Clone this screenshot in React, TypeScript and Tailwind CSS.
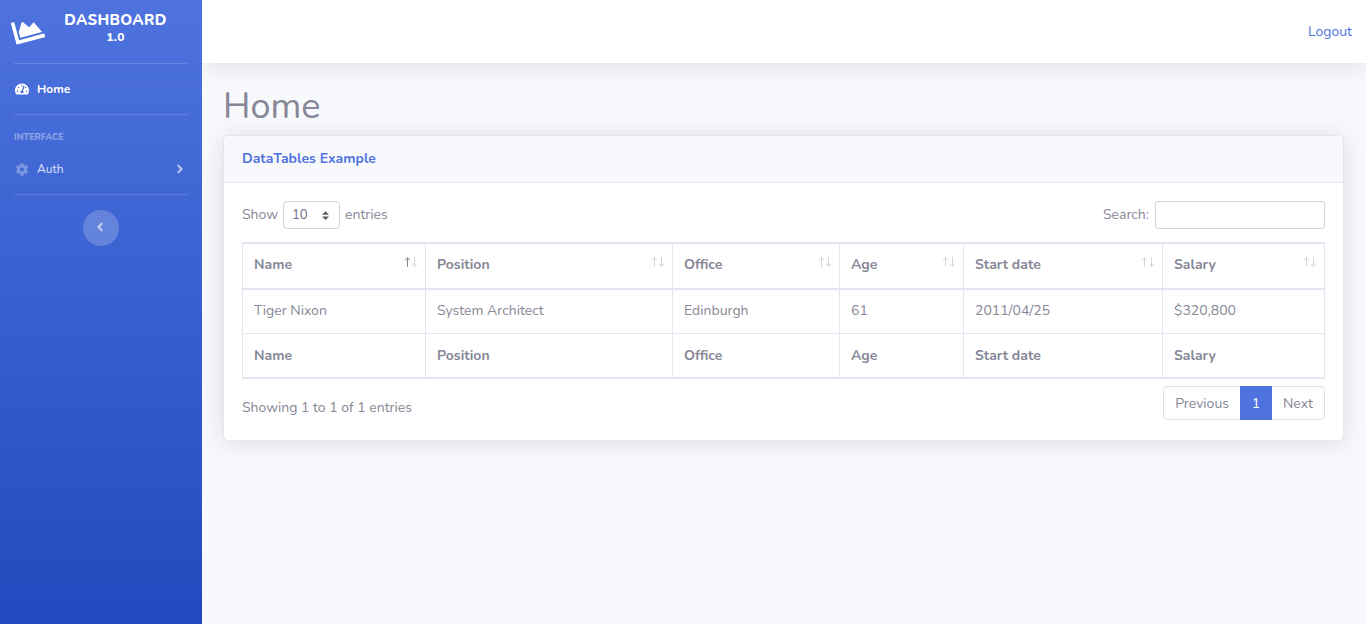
import { FaAngleLeft, FaAngleRight, FaChartArea, FaCog, FaTachometerAlt } from "react-icons/fa";

const columns = [
  { title: "Name", width: "w-[183px]" },
  { title: "Position", width: "w-[247px]" },
  { title: "Office", width: "w-[167px]" },
  { title: "Age", width: "w-[124px]" },
  { title: "Start date", width: "w-[199px]" },
  { title: "Salary", width: "w-[162px]" },
];

const rows = [["Tiger Nixon", "System Architect", "Edinburgh", "61", "2011/04/25", "$320,800"]];

function SortArrows({ ascending }: { ascending: boolean }) {
  return (
    <svg className="mb-[5px] h-[10px] w-[13px]" viewBox="0 0 13 10" fill="none" stroke="#858796" aria-hidden="true">
      <path d="M3.5 10V1M1 3.2L3.5 .8L6 3.2" strokeOpacity={ascending ? 1 : 0.35} />
      <path d="M10.5 0V9M8 6.8L10.5 9.2L13 6.8" strokeOpacity={0.35} />
    </svg>
  );
}

function Sidebar() {
  return (
    <nav className="relative z-10 flex w-[202px] shrink-0 flex-col bg-linear-to-b from-[#4e73df] to-[#224abe] pr-[15px] pl-[14px] text-white">
      <a href="#" className="-mr-[15px] -ml-[14px] flex h-[63px] items-center pl-[13px] font-extrabold">
        <FaChartArea className="mb-[4px] size-[30px] shrink-0 -rotate-15" />
        <span className="flex flex-1 flex-col items-center pr-[15px] pb-2 pl-[1px] text-center">
          <span className="text-[15px] leading-[19px] tracking-wide">DASHBOARD</span>
          <span className="text-[12px] leading-[15px] tracking-wide">1.0</span>
        </span>
      </a>
      <hr className="border-white/15" />
      <a href="#" className="flex h-[50px] items-center text-[12px] font-bold">
        <FaTachometerAlt className="mr-[8px] ml-[1px] size-[14px]" />
        Home
      </a>
      <hr className="border-white/15" />
      <h2 className="pt-[15px] text-[9px] leading-[14px] font-extrabold text-white/40">INTERFACE</h2>
      <button type="button" className="flex h-[50px] items-center text-[12px] text-white/80">
        <FaCog className="mr-[7px] h-[13px] w-[16px] text-white/30" />
        Auth
        <FaAngleRight className="ml-auto size-[14px] text-white/60" />
      </button>
      <hr className="border-white/15" />
      <button
        type="button"
        aria-label="Collapse sidebar"
        className="mt-[15px] flex size-9 items-center justify-center self-center rounded-full bg-white/20 text-white/60"
      >
        <FaAngleLeft className="mr-[2px] mb-[2px] size-[14px]" />
      </button>
    </nav>
  );
}

function EntriesTable() {
  return (
    <table className="w-full table-fixed border-separate border-spacing-0 border-y-2 border-l border-[#e3e6f0] text-left">
      <thead>
        <tr>
          {columns.map((column, index) => (
            <th
              key={column.title}
              aria-sort={index === 0 ? "ascending" : undefined}
              className={`${column.width} h-[46px] border-r border-b-2 border-[#e3e6f0] pr-2 pb-[3px] pl-[11px] font-bold`}
            >
              <button type="button" className="flex w-full items-center justify-between">
                {column.title}
                <SortArrows ascending={index === 0} />
              </button>
            </th>
          ))}
        </tr>
      </thead>
      <tbody>
        {rows.map((row) => (
          <tr key={row[0]}>
            {row.map((cell) => (
              <td key={cell} className="h-[44px] border-r border-b border-[#e3e6f0] px-[11px] pb-[1px]">
                {cell}
              </td>
            ))}
          </tr>
        ))}
      </tbody>
      <tfoot>
        <tr>
          {columns.map((column) => (
            <th key={column.title} className="h-[43px] border-r border-[#e3e6f0] px-[11px] font-bold">
              {column.title}
            </th>
          ))}
        </tr>
      </tfoot>
    </table>
  );
}

export default function App() {
  return (
    <div className="flex min-h-screen bg-[#f8f9fc] font-['Nunito','Lato',sans-serif] text-[14px] leading-[22px] text-[#858796]">
      <Sidebar />
      <div className="min-w-0 flex-1">
        <header className="flex h-[63px] items-center justify-end bg-white px-[14px] shadow-[0_2px_25px_rgba(58,59,69,0.15)]">
          <a href="#" className="text-[#4e73df]">
            Logout
          </a>
        </header>
        <main className="px-[22px] pt-[22px] pl-[21px]">
          <h1 className="mb-[6px] text-[36px] leading-[44px] font-normal">Home</h1>
          <section className="rounded-[5px] border border-[#e3e6f0] bg-white shadow-[0_2px_25px_rgba(58,59,69,0.15)]">
            <h2 className="rounded-t-[5px] border-b border-[#e3e6f0] bg-[#f8f9fc] px-[18px] py-3 font-bold text-[#4e73df]">
              DataTables Example
            </h2>
            <div className="p-[18px] pb-5">
              <div className="mb-[13px] flex items-center justify-between">
                <label className="flex items-center gap-[5px]">
                  Show
                  <span className="relative flex">
                    <select className="h-7 w-[57px] appearance-none rounded-[4px] border border-[#d1d3e2] bg-white pl-2 text-[13px] text-[#6e707e]">
                      <option>10</option>
                      <option>25</option>
                      <option>50</option>
                      <option>100</option>
                    </select>
                    <svg
                      viewBox="0 0 4 5"
                      className="pointer-events-none absolute top-[10px] right-[11px] h-[9px] w-[7px] fill-[#5a5c69]"
                      aria-hidden="true"
                    >
                      <path d="M2 0L0 2h4zm0 5L0 3h4z" />
                    </svg>
                  </span>
                  entries
                </label>
                <label className="flex items-center gap-[6px]">
                  Search:
                  <input
                    type="search"
                    className="h-7 w-[170px] rounded-[3px] border border-[#d1d3e2] bg-white px-2 text-[13px] outline-none"
                  />
                </label>
              </div>
              <EntriesTable />
              <div className="mt-[7px] flex items-start justify-between">
                <p className="pt-[11px]">Showing 1 to 1 of 1 entries</p>
                <nav aria-label="Table pages" className="flex h-[34px]">
                  <button type="button" className="rounded-l-[5px] border border-r-0 border-[#dddfeb] px-[11px] pt-[1px]">
                    Previous
                  </button>
                  <button type="button" aria-current="page" className="w-8 bg-[#4e73df] pt-[1px] text-white">
                    1
                  </button>
                  <button type="button" className="rounded-r-[5px] border border-l-0 border-[#dddfeb] px-[11px] pt-[1px]">
                    Next
                  </button>
                </nav>
              </div>
            </div>
          </section>
        </main>
      </div>
    </div>
  );
}
